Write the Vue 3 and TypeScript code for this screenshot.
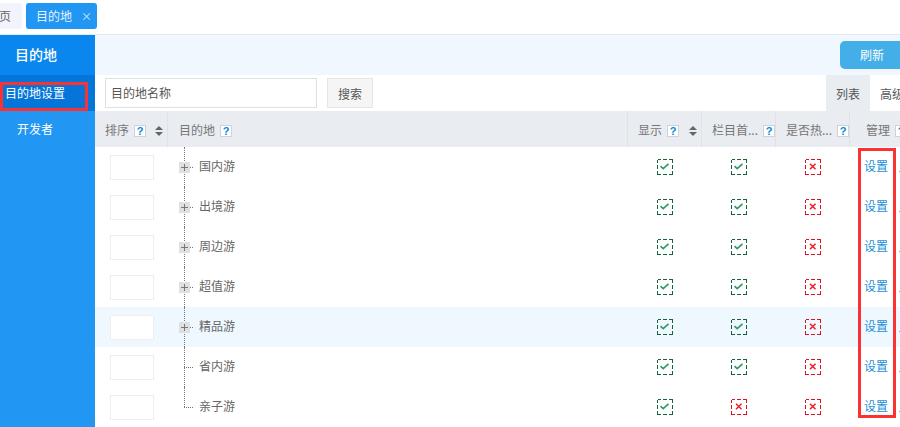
<script setup lang="ts">
interface Row { name: string; flags: boolean[]; branch: boolean; hover?: boolean }
const rows: Row[] = [
  { name: '国内游', flags: [true, true, false], branch: true },
  { name: '出境游', flags: [true, true, false], branch: true },
  { name: '周边游', flags: [true, true, false], branch: true },
  { name: '超值游', flags: [true, true, false], branch: true },
  { name: '精品游', flags: [true, true, false], branch: true, hover: true },
  { name: '省内游', flags: [true, true, false], branch: false },
  { name: '亲子游', flags: [true, false, false], branch: false },
]
</script>

<template>
  <div class="page">
    <div class="tabs">
      <div class="tab home">页</div>
      <div class="tab active">目的地<span class="close">×</span></div>
    </div>
    <div class="body">
      <aside class="side">
        <div class="side-title">目的地</div>
        <div class="side-item current">目的地设置</div>
        <div class="side-item">开发者</div>
        <div class="mark mark-side"></div>
      </aside>
      <main class="main">
        <div class="topbar"><button class="refresh">刷新</button></div>
        <div class="toolbar">
          <div class="search-input">目的地名称</div>
          <button class="search-btn">搜索</button>
          <div class="views">
            <span class="view on">列表</span>
            <span class="view">高级</span>
          </div>
        </div>
        <div class="row head">
          <div class="c sort">排序<i class="q">?</i><span class="updown"></span></div>
          <div class="c dest">目的地<i class="q">?</i></div>
          <div class="c flag h1">显示<i class="q">?</i><span class="updown"></span></div>
          <div class="c flag h2">栏目首...<i class="q">?</i></div>
          <div class="c flag h2">是否热...<i class="q">?</i></div>
          <div class="c manage h3">管理<i class="q">?</i></div>
        </div>
        <div v-for="(r, i) in rows" :key="r.name" class="row item" :class="{ hover: r.hover }">
          <div class="c sort"><div class="sort-box"></div></div>
          <div class="c dest tree">
            <span class="vline" :class="{ last: i === rows.length - 1 }"></span>
            <span class="hline"></span>
            <span v-if="r.branch" class="plus"></span>
            <span class="name">{{ r.name }}</span>
          </div>
          <div v-for="(f, j) in r.flags" :key="j" class="c flag">
            <svg class="check" width="16" height="16" viewBox="0 0 16 16">
              <rect x=".5" y=".5" width="15" height="15" fill="none" :stroke="f ? '#14633c' : '#e3101a'" stroke-dasharray="3.5 2 4 2 3.5 0" shape-rendering="crispEdges" />
              <path v-if="f" d="M3.5 7.2 6.2 9.6 11.5 4.8" fill="none" stroke="#2e9960" stroke-width="1.6" />
              <path v-else d="M5 4.7 10.5 10.3M10.5 4.7 5 10.3" fill="none" stroke="#ee2030" stroke-width="1.5" />
            </svg>
          </div>
          <div class="c manage"><a class="link">设置</a><span class="more"></span></div>
        </div>
        <div class="mark mark-col"></div>
      </main>
    </div>
  </div>
</template>

<style>
html, body { margin: 0; overflow: hidden; background: #fff; }
</style>

<style scoped>
.page { width: 900px; height: 427px; overflow: hidden; font-family: "Noto Sans CJK SC", "Liberation Sans", sans-serif; font-size: 12px; color: #666; }
.tabs { box-sizing: border-box; display: flex; gap: 4px; padding-top: 3px; margin-left: -34px; border-bottom: 1px solid #e3e9f2; height: 35px; }
.tab { height: 26px; line-height: 26px; border-radius: 3px; box-sizing: border-box; }
.home { width: 56px; background: #f1f4fa; text-align: right; padding-right: 11px; color: #666; }
.active { width: 71px; background: #2196f3; color: #e8f4ff; padding-left: 10px; }
.close { margin-left: 9px; font-size: 11px; color: #d5ebfd; }
.body { display: flex; height: 392px; }
.side { width: 95px; flex: none; background: #2196f3; position: relative; color: #fff; }
.side-title { height: 38px; line-height: 38px; padding-bottom: 2px; background: #0a87ee; padding-left: 15px; font-size: 14px; font-weight: 500; }
.side-item { height: 36px; line-height: 36px; padding-left: 17px; font-size: 12px; }
.side-item.current { background: #0575d9; padding-left: 5px; font-size: 12px; }
.mark { position: absolute; box-sizing: border-box; border: 3px solid #fa3232; pointer-events: none; }
.mark-side { left: 0; top: 47px; width: 88px; height: 29px; }
.main { flex: 1; min-width: 0; position: relative; }
.topbar { height: 40px; background: #f0f7fe; display: flex; align-items: center; justify-content: flex-end; overflow: hidden; }
.refresh { width: 64px; flex: none; height: 28px; margin-right: -4px; border: 0; border-radius: 5px; background: #43aee8; color: #fff; font: inherit; padding: 0 0 2px; }
.toolbar { height: 36px; display: flex; align-items: flex-start; padding-left: 10px; position: relative; }
.search-input { width: 212px; height: 30px; margin-top: 3px; box-sizing: border-box; border: 1px solid #dfe2e5; line-height: 28px; padding-left: 5px; color: #555; }
.search-btn { width: 46px; height: 30px; margin: 3px 0 0 10px; box-sizing: border-box; border: 1px solid #e6e6e6; background: #f5f5f5; color: #555; font: inherit; padding: 0; }
.views { position: absolute; left: 731px; top: 0; display: flex; }
.view { width: 44px; height: 36px; line-height: 37px; text-align: center; color: #555; flex: none; }
.view.on { background: #e9ecf1; }
.row { display: flex; }
.head { height: 36px; background: #e9ecf1; color: #777; line-height: 38px; }
.head .c { border-right: 1px solid #dfe2e6; box-sizing: border-box; }
.c { flex: none; position: relative; white-space: nowrap; overflow: hidden; }
.sort { width: 73px; }
.dest { width: 460px; }
.flag { width: 74px; }
.manage { width: 60px; }
.head .sort { padding-left: 10px; }
.head .dest { padding-left: 11px; }
.head .h1 { padding-left: 10px; }
.head .h2 { padding-left: 10px; }
.head .h3 { padding-left: 16px; border-right: 0; }
.q { display: inline-block; width: 10px; height: 10px; margin-left: 5px; border: 1px solid #cfd3d8; background: #fff; color: #0a87d8; font: bold 11px/10px "Liberation Sans", sans-serif; text-align: center; vertical-align: 0; font-style: normal; }
.updown { position: absolute; right: 4px; top: 15px; width: 8px; height: 10px; }
.updown::before, .updown::after { content: ""; position: absolute; left: 0; border-left: 4px solid transparent; border-right: 4px solid transparent; }
.updown::before { top: 0; border-bottom: 4px solid #666; }
.updown::after { bottom: 0; border-top: 4px solid #666; }
.item { height: 40px; align-items: center; }
.item.hover { background: #f0f8ff; }
.item .c { height: 40px; display: flex; align-items: center; }
.sort-box { width: 44px; height: 25px; margin-left: 15px; box-sizing: border-box; border: 1px solid #eeeeee; background: #fff; }
.vline { position: absolute; left: 16px; top: 0; bottom: 0; border-left: 1px dotted #777; }
.vline.last { bottom: 20px; }
.hline { position: absolute; left: 16px; top: 20px; width: 9px; border-top: 1px dotted #777; }
.plus { position: absolute; left: 11px; top: 15px; width: 11px; height: 11px; background: #dfe0e2 linear-gradient(#777, #777) center/7px 1px no-repeat; }
.plus::after { content: ""; position: absolute; left: 5px; top: 2px; width: 1px; height: 7px; background: #777; }
.name { margin-left: 31px; padding-bottom: 3px; color: #666; }
.flag { justify-content: center; }
.check { display: block; }
.manage { padding-left: 14px; box-sizing: border-box; }
.link { color: #1a8fd8; padding-bottom: 3px; }
.more { position: absolute; left: 49px; top: 24px; width: 1px; height: 1px; background: #c8963c; }
.mark-col { left: 763px; top: 113px; width: 38px; height: 270px; }
</style>
